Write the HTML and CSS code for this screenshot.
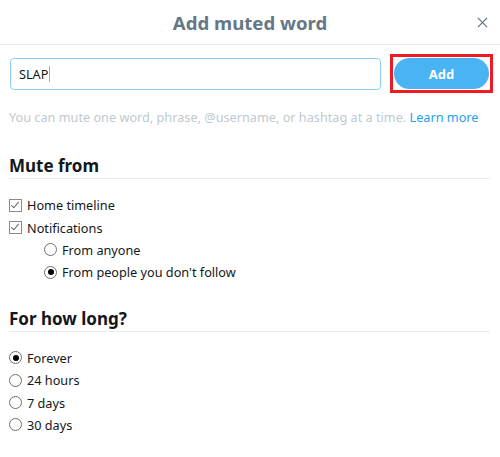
FILE: index.html
```html
<!DOCTYPE html>
<html lang="en">
	<head>
		<meta charset="UTF-8" />
		<title>Add muted word</title>
		<link rel="stylesheet" href="styles.css">
	</head>
	<body>
		<div class="dialog">
			<header class="dialog-header">
				<h1>Add muted word</h1>
				<svg class="close" viewBox="0 0 12 12">
					<path d="M1 1 L11 11 M11 1 L1 11" stroke="#657786" stroke-width="1.4" fill="none" />
				</svg>
			</header>
			<div class="word-row">
				<div class="word-input">SLAP<span class="caret"></span></div>
				<div class="highlight">
					<button class="add-btn">Add</button>
				</div>
			</div>
			<p class="hint">
				You can mute one word, phrase, @username, or hashtag at a time.
				<a href="#">Learn more</a>
			</p>

			<section class="group">
				<h2>Mute from</h2>
				<ul class="options">
					<li><span class="check on"></span>Home timeline</li>
					<li><span class="check on"></span>Notifications</li>
					<li class="sub"><span class="radio"></span>From anyone</li>
					<li class="sub"><span class="radio on"></span>From people you don't follow</li>
				</ul>
			</section>

			<section class="group">
				<h2>For how long?</h2>
				<ul class="options">
					<li><span class="radio on"></span>Forever</li>
					<li><span class="radio"></span>24 hours</li>
					<li><span class="radio"></span>7 days</li>
					<li><span class="radio"></span>30 days</li>
				</ul>
			</section>
		</div>
	</body>
</html>
```

FILE: styles.css
```css
body {
	margin: 0;
	background: #fff;
	font-family: 'Noto Sans', 'Open Sans', sans-serif;
	color: #14171a;
}
.dialog {
	width: 500px;
}
.dialog-header {
	position: relative;
	height: 44px;
	display: flex;
	align-items: center;
	justify-content: center;
	border-bottom: 1px solid #e6ecf0;
}
.dialog-header h1 {
	margin: 0;
	font-size: 18.6px;
	font-weight: 700;
	color: #657786;
}
.close {
	position: absolute;
	right: 12px;
	top: 17px;
	width: 11px;
	height: 11px;
}
.word-row {
	display: flex;
	align-items: center;
	gap: 9px;
	padding: 9px 0 0 10px;
}
.word-input {
	width: 361px;
	height: 30px;
	padding-left: 8px;
	display: flex;
	align-items: center;
	border: 1px solid #8ed0f9;
	border-radius: 4px;
	font-size: 12.7px;
}
.caret {
	display: inline-block;
	width: 1px;
	height: 16px;
	background: #aaa;
	margin-left: 1px;
}
.highlight {
	border: 3px solid #ed1c24;
	padding: 1px;
}
.add-btn {
	display: block;
	width: 95px;
	height: 31px;
	border: none;
	border-radius: 16px;
	background: #4ab3f4;
	color: #fff;
	font-family: inherit;
	font-size: 13px;
	font-weight: 700;
}
.hint {
	margin: 15px 0 0 9px;
	font-size: 12.7px;
	color: #c1c9d0;
}
.hint a {
	color: #1da1f2;
	text-decoration: none;
}
.group {
	margin-top: 28px;
	padding: 0 10px 0 9px;
}
.group + .group {
	margin-top: 23px;
}
.group h2 {
	margin: 0;
	padding-bottom: 1px;
	font-size: 17px;
	font-weight: 700;
	border-bottom: 1px solid #e6ecf0;
}
.options {
	list-style: none;
	margin: 15px 0 0;
	padding: 0;
}
.options li {
	display: flex;
	align-items: center;
	gap: 5px;
	height: 22.4px;
	font-size: 12.7px;
}
.options li.sub {
	padding-left: 35px;
}
.check {
	position: relative;
	width: 11px;
	height: 11px;
	border: 1px solid #8a8a8a;
}
.check.on::after {
	content: '';
	position: absolute;
	left: 3px;
	top: 0px;
	width: 3px;
	height: 7px;
	border: solid #666;
	border-width: 0 1px 1px 0;
	transform: rotate(40deg);
}
.radio {
	position: relative;
	width: 11px;
	height: 11px;
	border: 1px solid #6f6f6f;
	border-radius: 50%;
}
.radio.on::after {
	content: '';
	position: absolute;
	left: 2.5px;
	top: 2.5px;
	width: 6px;
	height: 6px;
	border-radius: 50%;
	background: #000;
}
```
